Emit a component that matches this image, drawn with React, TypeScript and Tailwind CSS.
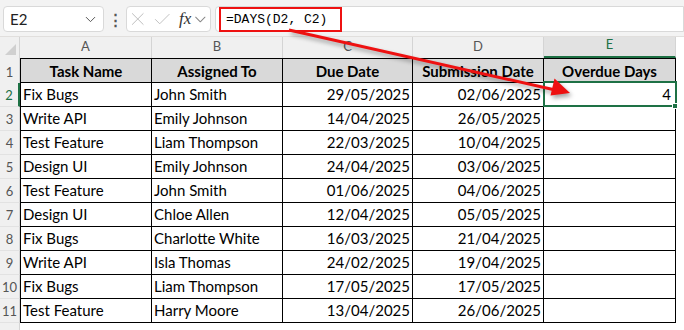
import { ChevronDown, Check, X } from "lucide-react";

interface Task {
  task: string;
  assignee: string;
  due: string;
  submitted: string;
  overdue?: number;
}

const tasks: Task[] = [
  { task: "Fix Bugs", assignee: "John Smith", due: "29/05/2025", submitted: "02/06/2025", overdue: 4 },
  { task: "Write API", assignee: "Emily Johnson", due: "14/04/2025", submitted: "26/05/2025" },
  { task: "Test Feature", assignee: "Liam Thompson", due: "22/03/2025", submitted: "10/04/2025" },
  { task: "Design UI", assignee: "Emily Johnson", due: "24/04/2025", submitted: "03/06/2025" },
  { task: "Test Feature", assignee: "John Smith", due: "01/06/2025", submitted: "04/06/2025" },
  { task: "Design UI", assignee: "Chloe Allen", due: "12/04/2025", submitted: "05/05/2025" },
  { task: "Fix Bugs", assignee: "Charlotte White", due: "16/03/2025", submitted: "21/04/2025" },
  { task: "Write API", assignee: "Isla Thomas", due: "24/02/2025", submitted: "19/04/2025" },
  { task: "Fix Bugs", assignee: "Liam Thompson", due: "17/05/2025", submitted: "17/05/2025" },
  { task: "Test Feature", assignee: "Harry Moore", due: "13/04/2025", submitted: "26/06/2025" },
];

const colWidths = ["w-[132px]", "w-[131px]", "w-[130px]", "w-[131px]", "w-[132px]"];
const letters = ["A", "B", "C", "D", "E"];
const headers = ["Task Name", "Assigned To", "Due Date", "Submission Date", "Overdue Days"];

const RowNum = ({ n, active }: { n: number; active?: boolean }) => (
  <div
    className={`w-[20px] shrink-0 bg-[#f0f0f0] border-b border-[#e2e2e2] flex items-end justify-center pb-[1px] text-[13px] ${
      active ? "text-[#1e7145] border-r-2 border-r-[#1e7145]" : "text-[#555] border-r border-r-[#d4d4d4]"
    }`}
  >
    {n}
  </div>
);

export default function App() {
  return (
    <div className="relative w-[684px] h-[330px] overflow-hidden bg-white font-['Lato',sans-serif] text-black">
      {/* Formula bar */}
      <div className="h-[37px] bg-[#f3f3f3] border-b border-[#e1dfdd] flex items-start pt-[6px]">
        <div className="ml-[3px] w-[101px] h-[26px] bg-white border border-[#d9d9d9] rounded-[4px] flex items-center justify-between pl-[6px] pr-[4px]">
          <span className="text-[15px] text-[#222]">E2</span>
          <ChevronDown className="w-[17px] h-[17px] text-[#555]" strokeWidth={1.4} />
        </div>
        <div className="w-[22px] h-[26px] flex items-center justify-center text-[#555] text-[15px] font-bold">⋮</div>
        <div className="w-[85px] h-[26px] bg-white border border-[#d9d9d9] rounded-[4px] flex items-center">
          <X className="w-[22px] h-[22px] text-[#bdbdbd]" strokeWidth={1.1} />
          <Check className="ml-[3px] w-[21px] h-[21px] text-[#bdbdbd]" strokeWidth={1.1} />
          <span className="ml-[7px] font-['Liberation_Serif',serif] italic text-[17px] text-[#333]">fx</span>
          <ChevronDown className="w-[19px] h-[19px] text-[#888]" strokeWidth={1.3} />
        </div>
        <div className="ml-[4px] flex-1 h-[26px] bg-white border border-[#d9d9d9] rounded-l-[4px] flex items-center pl-[3px]">
          <span className="h-[25px] mt-[1px] border-[2.5px] border-[#ee1111] flex items-center pl-[5px] w-[123px] font-['Liberation_Mono',monospace] text-[13px] text-black">
            =DAYS(D2, C2)
          </span>
        </div>
      </div>

      {/* Column letters */}
      <div className="flex h-[21px]">
        <div className="w-[20px] shrink-0 bg-[#f0f0f0] border-r border-[#d4d4d4] relative">
          <div className="absolute right-[3px] bottom-[3px] w-0 h-0 border-l-[11px] border-l-transparent border-b-[11px] border-b-[#d0d0d0]" />
        </div>
        {letters.map((l, i) => (
          <div
            key={l}
            className={`${colWidths[i]} shrink-0 flex items-end justify-center pb-[2px] text-[13px] ${
              l === "E"
                ? "bg-[#e2e2e2] text-[#1e7145] border-b-2 border-[#1e7145] border-r border-r-[#d4d4d4]"
                : "bg-[#f0f0f0] text-[#555] border-r border-[#d4d4d4]"
            }`}
          >
            {l}
          </div>
        ))}
      </div>

      {/* Header row */}
      <div className="flex h-[25px]">
        <div className="w-[20px] shrink-0 bg-[#f0f0f0] border-r border-[#d4d4d4] flex items-end justify-center pb-[1px] text-[13px] text-[#555]">
          1
        </div>
        {headers.map((h, i) => (
          <div
            key={h}
            className={`${colWidths[i]} shrink-0 bg-[#d9d9d9] border-t border-b border-r border-black ${
              i === 0 ? "border-l" : ""
            } flex items-center justify-center font-bold text-[15px] pt-[1px]`}
          >
            {h}
          </div>
        ))}
      </div>

      {/* Data rows */}
      {tasks.map((t, r) => (
        <div key={r} className="flex h-[24px]">
          <RowNum n={r + 2} active={r === 0} />
          <div className={`${colWidths[0]} shrink-0 border-l border-r border-b border-black pl-[2px] flex items-center text-[15px]`}>
            {t.task}
          </div>
          <div className={`${colWidths[1]} shrink-0 border-r border-b border-black pl-[2px] flex items-center text-[15px]`}>
            {t.assignee}
          </div>
          <div className={`${colWidths[2]} shrink-0 border-r border-b border-black pr-[2px] flex items-center justify-end text-[15px]`}>
            {t.due}
          </div>
          <div className={`${colWidths[3]} shrink-0 border-r border-b border-black pr-[2px] flex items-center justify-end text-[15px]`}>
            {t.submitted}
          </div>
          <div className={`${colWidths[4]} shrink-0 border-r border-b border-black pr-[4px] flex items-center justify-end text-[15px]`}>
            {t.overdue ?? ""}
          </div>
        </div>
      ))}

      {/* Row 12 stub */}
      <div className="flex h-[10px]">
        <div className="w-[20px] shrink-0 bg-[#f0f0f0] border-r border-[#d4d4d4]" />
      </div>

      {/* Active cell E2 */}
      <div className="absolute left-[543px] top-[81px] w-[134px] h-[26px] border-2 border-[#1e7145] pointer-events-none" />
      <div className="absolute left-[672px] top-[103px] w-[6px] h-[6px] bg-[#1e7145] border border-white" />

      {/* Arrow annotation */}
      <svg
        className="absolute left-0 top-0 drop-shadow-[2px_3px_2px_rgba(0,0,0,0.35)] pointer-events-none"
        width="684"
        height="330"
        viewBox="0 0 684 330"
      >
        <line x1="289" y1="30" x2="553" y2="89.5" stroke="#ee1111" strokeWidth="3" />
        <polygon points="570,93 550.5,95.5 554.5,78.5" fill="#ee1111" />
      </svg>
    </div>
  );
}
